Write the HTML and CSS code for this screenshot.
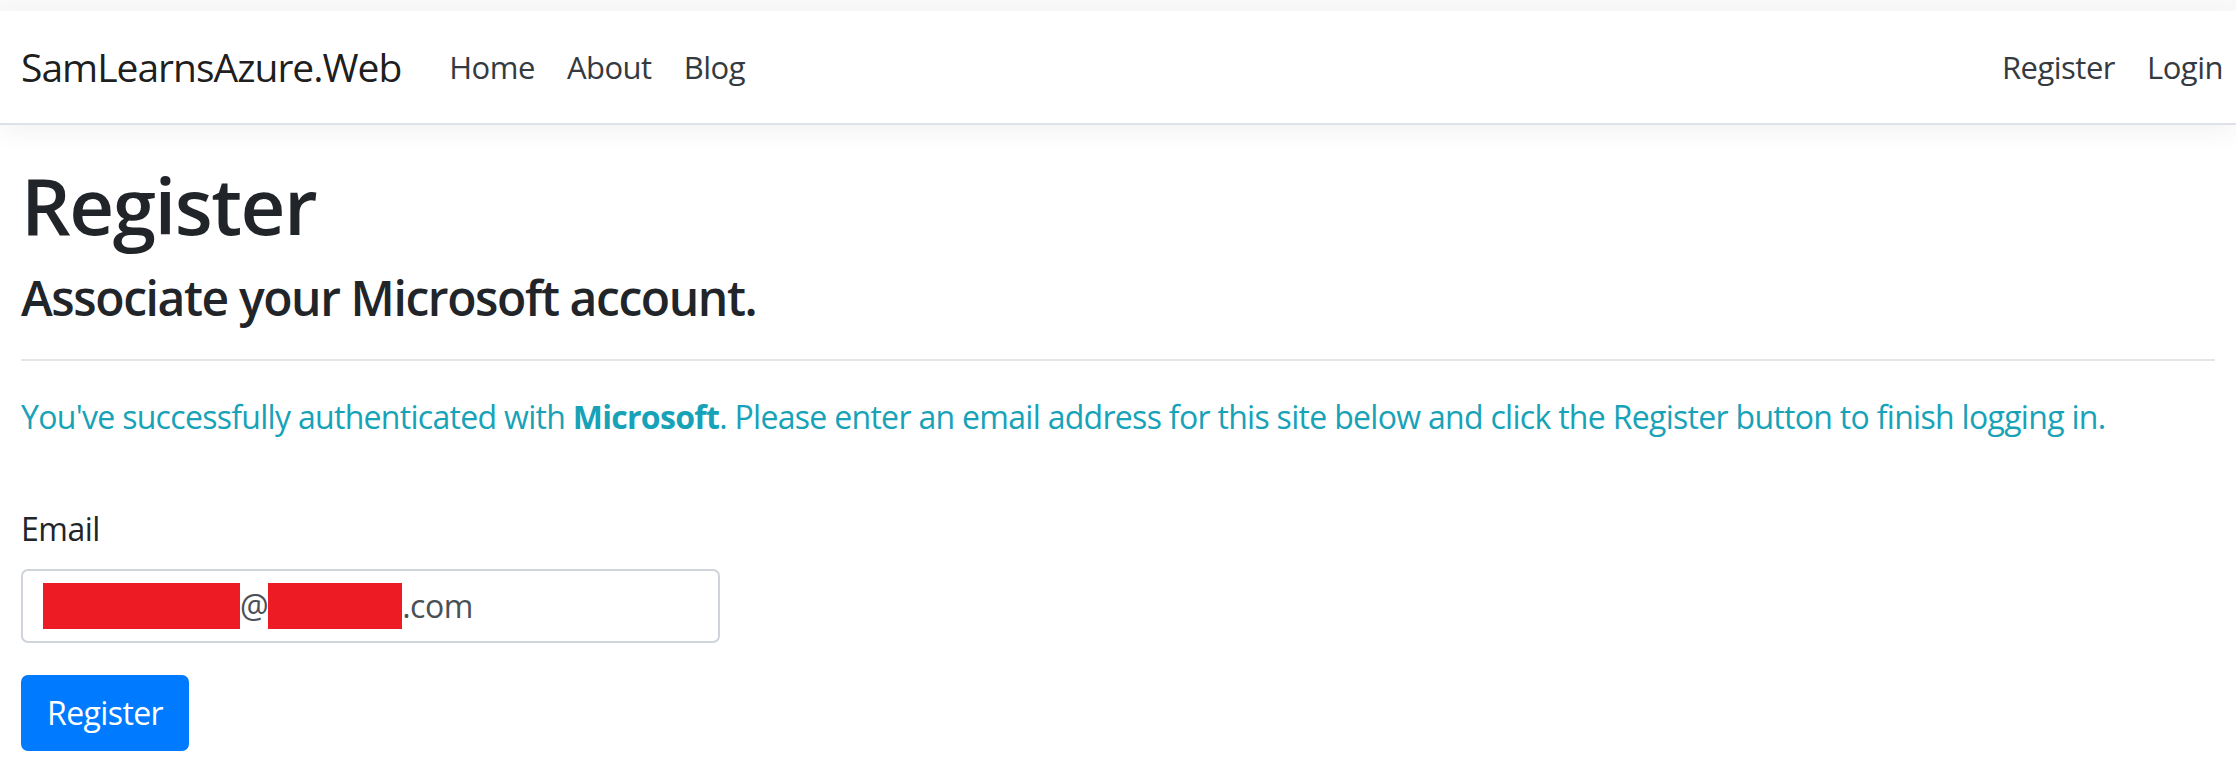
FILE: index.html
```html
<!DOCTYPE html>
<html lang="en">
<head>
<meta charset="utf-8">
<title>Register - SamLearnsAzure.Web</title>
<link rel="stylesheet" href="styles.css">
</head>
<body>
<div class="top-strip"></div>
<header class="site-header">
  <nav class="navbar">
    <a class="navbar-brand" href="#">SamLearnsAzure.Web</a>
    <ul class="nav nav-main">
      <li><a class="nav-link" href="#">Home</a></li>
      <li><a class="nav-link" href="#">About</a></li>
      <li><a class="nav-link" href="#">Blog</a></li>
    </ul>
    <ul class="nav nav-account">
      <li><a class="nav-link" href="#">Register</a></li>
      <li><a class="nav-link nav-link-last" href="#">Login</a></li>
    </ul>
  </nav>
</header>
<main class="container">
  <h1 class="page-title">Register</h1>
  <h4 class="page-subtitle">Associate your Microsoft account.</h4>
  <hr class="divider">
  <p class="text-info">You've successfully authenticated with <strong>Microsoft</strong>. Please enter an email address for this site below and click the Register button to finish logging in.</p>
  <div class="row">
    <div class="form-col">
      <form class="register-form">
        <div class="validation-summary"><ul><li class="hidden-item"></li></ul></div>
        <div class="form-group">
          <label class="form-label">Email</label>
          <div class="form-control"><span class="redact redact-user"></span><span>@</span><span class="redact redact-domain"></span><span>.com</span></div>
        </div>
        <button type="button" class="btn-primary">Register</button>
      </form>
    </div>
  </div>
</main>
</body>
</html>
```
FILE: styles.css
```css
html, body {
  margin: 0;
  padding: 0;
}
body {
  font-family: "Open Sans", "Noto Sans", sans-serif;
  color: #212529;
  background: #fff;
  overflow: hidden;
}
.top-strip {
  height: 11px;
  background: #f9f9f9;
}
.site-header {
  margin-bottom: 32px;
}
.navbar {
  display: flex;
  align-items: center;
  padding: 16px 0 16px 21px;
  background: #fff;
  border-bottom: 2px solid #dee2e6;
  box-shadow: 0 8px 24px rgba(0, 0, 0, 0.05);
}
.navbar-brand {
  font-size: 39px;
  letter-spacing: -1px;
  line-height: 60px;
  padding: 10px 0;
  margin-right: 32px;
  color: rgba(0, 0, 0, 0.9);
  text-decoration: none;
  white-space: nowrap;
}
.nav {
  display: flex;
  list-style: none;
  margin: 0;
  padding: 0;
}
.nav-account {
  margin-left: auto;
}
.nav-link {
  display: block;
  font-size: 31px;
  letter-spacing: -0.5px;
  line-height: 48px;
  padding: 16px;
  color: #343a40;
  text-decoration: none;
}
.nav-link-last {
  padding-right: 13px;
}
.container {
  padding: 0 21px;
}
.page-title {
  font-size: 78px;
  font-weight: 600;
  letter-spacing: -1.5px;
  line-height: 96px;
  margin: 0 0 16px;
}
.page-subtitle {
  font-size: 48px;
  font-weight: 600;
  letter-spacing: -1.4px;
  line-height: 1.2;
  margin: 0 0 16px;
}
.divider {
  margin: 32px 0;
  border: 0;
  border-top: 2px solid rgba(0, 0, 0, 0.1);
  height: 0;
}
.text-info {
  font-size: 32px;
  letter-spacing: -0.7px;
  line-height: 48px;
  margin: 0 0 32px;
  color: #17a2b8;
  white-space: nowrap;
}
.text-info strong {
  font-weight: 700;
}
.row {
  display: flex;
}
.form-col {
  width: 699px;
  display: flow-root;
}
.validation-summary ul {
  margin: 0 0 32px;
  padding: 0;
}
.hidden-item {
  display: none;
}
.form-group {
  margin-bottom: 32px;
}
.form-label {
  display: inline-block;
  font-size: 32px;
  letter-spacing: -0.5px;
  line-height: 48px;
  margin-bottom: 16px;
}
.form-control {
  box-sizing: border-box;
  display: flex;
  align-items: center;
  width: 699px;
  height: 74px;
  padding: 0 20px;
  border: 2px solid #ced4da;
  border-radius: 7px;
  color: #495057;
  font-size: 32px;
  letter-spacing: -0.5px;
  background: #fff;
}
.redact {
  display: inline-block;
  height: 46px;
  background: #ed1c24;
}
.redact-user {
  width: 197px;
}
.redact-domain {
  width: 134px;
}
.btn-primary {
  display: inline-block;
  font-family: inherit;
  font-size: 32px;
  letter-spacing: -0.6px;
  line-height: 48px;
  padding: 12px 24px;
  color: #fff;
  background: #007bff;
  border: 2px solid #007bff;
  border-radius: 7px;
}
```
